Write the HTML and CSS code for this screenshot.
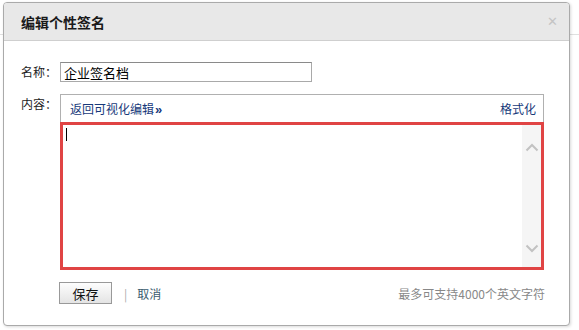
FILE: index.html
```html
<!DOCTYPE html>
<html>
<head>
  <meta charset="UTF-8">
  <title>编辑个性签名</title>
  <link rel="stylesheet" href="styles.css">
</head>
<body>
  <div class="page">
    <div class="page-head"></div>
  </div>

  <div class="dialog">
    <div class="dialog-head">
      <h3>编辑个性签名</h3>
      <span class="close">&#x2715;</span>
    </div>

    <div class="dialog-body">
      <div class="row">
        <label for="sigName">名称：</label>
        <input type="text" id="sigName" value="企业签名档">
      </div>

      <div class="row">
        <label>内容：</label>
        <div class="editor">
          <div class="toolbar">
            <a class="back">返回可视化编辑<b>»</b></a>
            <a class="format">格式化</a>
          </div>
          <div class="source">
            <div class="text"><span class="caret"></span></div>
            <div class="scroll">
              <svg width="14" height="9" viewBox="0 0 14 9"><path d="M1.5 7.5 L7 2 L12.5 7.5" fill="none" stroke="#c2c2c2" stroke-width="2"/></svg>
              <svg width="14" height="9" viewBox="0 0 14 9"><path d="M1.5 1.5 L7 7 L12.5 1.5" fill="none" stroke="#c2c2c2" stroke-width="2"/></svg>
            </div>
          </div>
        </div>
      </div>

      <div class="footer">
        <button class="save">保存</button>
        <span class="sep">|</span>
        <a class="cancel">取消</a>
        <span class="limit">最多可支持4000个英文字符</span>
      </div>
    </div>
  </div>
</body>
</html>
```

FILE: styles.css
```css
body {
  margin: 0;
  font-family: "Noto Sans CJK SC", "Liberation Sans", sans-serif;
  font-size: 12px;
  color: #333;
  background-color: #fff;
}
.page-head {
  height: 34px;
  border-bottom: 1px solid #e0e0e0;
}
.dialog {
  position: absolute;
  left: 3px;
  top: 2px;
  width: 565px;
  height: 322px;
  background-color: #fff;
  border: 1px solid #aaa;
  border-radius: 4px;
  box-shadow: 1px 1px 3px rgba(0,0,0,0.15);
  overflow: hidden;
}
.dialog-head {
  height: 37px;
  background-color: #e8e8e8;
  border-bottom: 1px solid #cfcfcf;
  display: flex;
  align-items: center;
  justify-content: space-between;
  padding: 0 11px 0 17px;
}
.dialog-head h3 {
  margin: 0;
  font-size: 14px;
  font-weight: bold;
  color: #1a1a1a;
}
.close {
  color: #c4c4c4;
  font-size: 13px;
  font-family: "DejaVu Sans", sans-serif;
}
.dialog-body {
  padding: 21px 0 0 17px;
}
.row {
  display: flex;
  align-items: flex-start;
  margin-bottom: 12px;
}
.row label {
  width: 39px;
  line-height: 19px;
  color: #222;
}
.row input[type="text"] {
  width: 252px;
  height: 20px;
  box-sizing: border-box;
  border: 1px solid #a9a9a9;
  border-top-color: #8a8a8a;
  padding: 0 3px;
  font-family: inherit;
  font-size: 13px;
  color: #000;
}
.editor {
  width: 484px;
}
.toolbar {
  height: 27px;
  border: 1px solid #b0b0b0;
  border-bottom: none;
  display: flex;
  align-items: center;
  justify-content: space-between;
  padding: 0 7px 0 9px;
}
.toolbar a {
  color: #17397a;
  font-size: 12px;
}
.toolbar b {
  font-family: "Liberation Sans", sans-serif;
  font-size: 13px;
  margin-left: 1px;
}
.source {
  height: 148px;
  box-sizing: border-box;
  border: 3px solid #e04444;
  display: flex;
}
.text {
  flex: 1;
  padding: 3px 0 0 3px;
}
.caret {
  display: block;
  width: 1px;
  height: 13px;
  background-color: #000;
}
.scroll {
  width: 19px;
  background-color: #f5f5f5;
  display: flex;
  flex-direction: column;
  justify-content: space-between;
  align-items: center;
  padding: 18px 0 14px;
}
.footer {
  display: flex;
  align-items: center;
  width: 486px;
  margin-top: 6px;
  margin-left: 38px;
}
.save {
  width: 53px;
  height: 22px;
  border: 1px solid #999;
  border-radius: 0;
  background: linear-gradient(#fdfdfd, #e4e4e4);
  font-family: inherit;
  font-size: 13px;
  color: #111;
  padding: 0;
}
.sep {
  color: #aaa;
  margin: 0 10px 0 12px;
}
.cancel {
  color: #3a5b6e;
  font-size: 12px;
}
.limit {
  margin-left: auto;
  color: #888;
  font-size: 12px;
}
```
